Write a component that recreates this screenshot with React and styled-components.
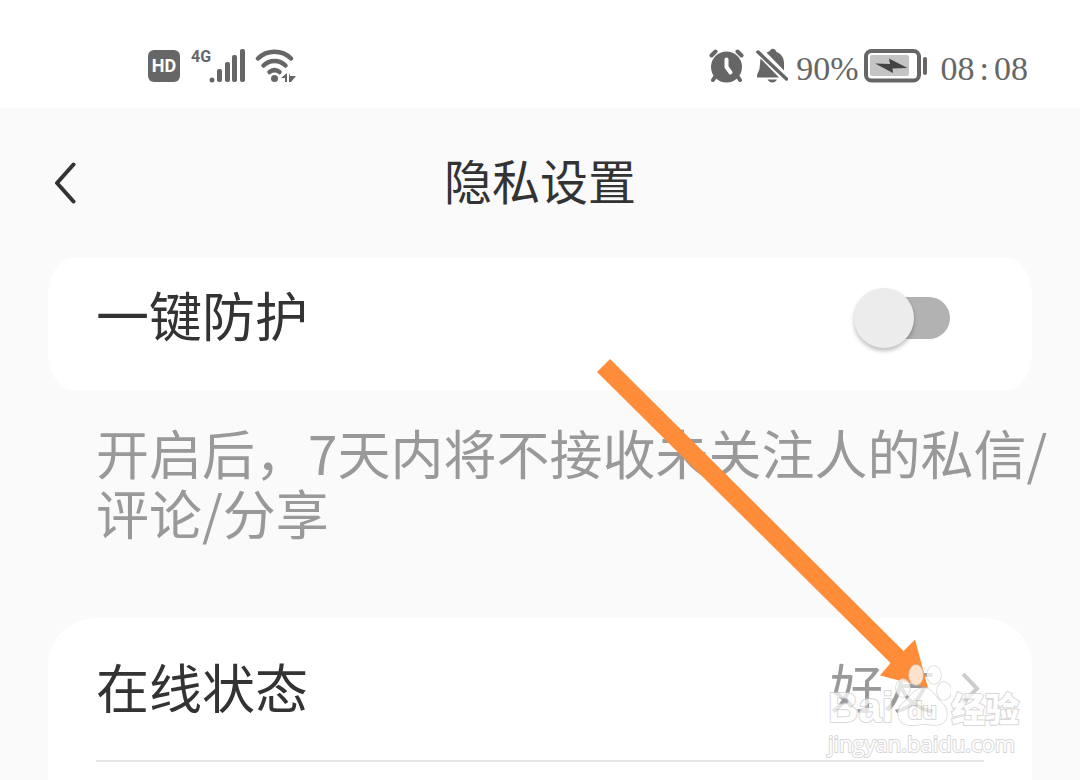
import React, { useState } from 'react';
import styled, { createGlobalStyle } from 'styled-components';

const App = () => {
  const [guard, setGuard] = useState(false);

  return (
    <Page>
      <GlobalStyle />
      <StatusBar>
        <StatusGroup>
          <HdBadge>HD</HdBadge>
          <Network>4G</Network>
          <SignalIcon />
          <WifiIcon />
        </StatusGroup>
        <StatusGroup>
          <AlarmIcon />
          <MutedIcon />
          <StatusText>90%</StatusText>
          <BatteryIcon />
          <Clock>
            <span>08</span>
            <span>:</span>
            <span>08</span>
          </Clock>
        </StatusGroup>
      </StatusBar>

      <Header>
        <BackButton aria-label="返回">
          <svg width="24" height="44" viewBox="0 0 24 44" fill="none">
            <path
              d="M21.500 3.500 5 22 21.500 40.500"
              stroke="#333"
              strokeWidth="4"
              strokeLinecap="round"
              strokeLinejoin="round"
            />
          </svg>
        </BackButton>
        <Title>隐私设置</Title>
      </Header>

      <GuardCard>
        <Label htmlFor="guard">一键防护</Label>
        <Switch
          id="guard"
          type="checkbox"
          role="switch"
          checked={guard}
          onChange={(e) => setGuard(e.target.checked)}
        />
      </GuardCard>
      <Hint>开启后，7天内将不接收未关注人的私信/评论/分享</Hint>

      <ListCard>
        <ListRow>
          <RowName>在线状态</RowName>
          <RowValue>
            <RowName>好友</RowName>
            <svg width="22" height="36" viewBox="0 0 22 36" fill="none">
              <path d="M1 3 15 17.500 1 32" stroke="#ccc" strokeWidth="4" />
            </svg>
          </RowValue>
        </ListRow>
      </ListCard>

      <Arrow width="332" height="330" viewBox="0 0 332 330">
        <path
          d="M13 0 306.500 292 318 280.500 331 329 283 316.500 293.500 304 0 13Z"
          fill="#ff8c39"
        />
      </Arrow>

      <Watermark>
        <Brand>
          <Latin>Bai</Latin>
          <Paw>
            <svg width="58" height="64" viewBox="0 0 58 64">
              <g fill="#fff" stroke="#ccc" strokeWidth="1.500">
                <ellipse cx="10" cy="25" rx="7" ry="9" />
                <ellipse cx="23" cy="12" rx="7" ry="10" />
                <ellipse cx="41" cy="12" rx="7" ry="9" />
                <ellipse cx="51" cy="28" rx="7" ry="9" />
                <path d="M31 25c8 0 11 9 17 14 9 8 8 23-5 23-6 0-8-1-13-1s-8 2-14 1C4 61 2 47 10 40c8-6 11-15 21-15Z" />
              </g>
            </svg>
            <PawText>du</PawText>
          </Paw>
          <Chinese>经验</Chinese>
        </Brand>
        <Site>jingyan.baidu.com</Site>
      </Watermark>
    </Page>
  );
};

export default App;

const SignalIcon = () => (
  <Signal width="36" height="34" viewBox="0 0 36 34" fill="#666">
    <circle cx="3" cy="31" r="2.500" />
    <rect x="8" y="20" width="5" height="13" rx="2" />
    <rect x="16" y="13" width="5" height="20" rx="2" />
    <rect x="23" y="6" width="5" height="27" rx="2" />
    <rect x="31" y="0" width="5" height="33" rx="2" />
  </Signal>
);

const WifiIcon = () => (
  <Wifi width="42" height="34" viewBox="0 0 42 34" fill="none">
    <g stroke="#666" strokeWidth="4.500" strokeLinecap="round">
      <path d="M3 9.500C12 .5 27 .5 36 9.500" />
      <path d="M8.500 16.500c6-6 16-6 22 0" />
      <path d="M14.500 23c3.500-2.500 7-2.500 10 0" />
    </g>
    <circle cx="19.500" cy="29.500" r="3.500" fill="#666" />
    <path d="M32 24v9h-2v-4h-4zM34 24l1 3h6l-5 6h-2z" fill="#666" />
  </Wifi>
);

const AlarmIcon = () => (
  <svg width="36" height="34" viewBox="0 0 36 34" fill="none">
    <circle cx="17.500" cy="18" r="15.500" fill="#666" />
    <g stroke="#666" strokeWidth="4" strokeLinecap="round">
      <path d="M2.500 6.500 6.500 2.500M32.500 6.500 28.500 2.500M6 28l-2 3M29 28l2 3" />
    </g>
    <path
      d="M17.500 10.500V18l4 5.500"
      stroke="#fff"
      strokeWidth="4"
      strokeLinecap="round"
      strokeLinejoin="round"
    />
  </svg>
);

const MutedIcon = () => (
  <Muted width="34" height="36" viewBox="0 0 34 36" fill="#666">
    <path d="M6.500 10.500 25 29.500H3V27l2.500-6z" />
    <path d="M12.500 4.500 16 3c1-3 5-3 6.500 1 5 2 7.500 6 7.500 11v7.500z" />
    <path d="M13.500 31.500H23c-2 4-7.500 4-9.500 0Z" />
    <path d="M4 4 32.500 31" stroke="#666" strokeWidth="3.500" strokeLinecap="round" />
  </Muted>
);

const BatteryIcon = () => (
  <Battery width="64" height="34" viewBox="0 0 64 34">
    <rect x="2" y="2" width="53" height="29.500" rx="5.500" fill="none" stroke="#666" strokeWidth="4" />
    <rect x="6" y="6" width="39" height="21" rx="2" fill="#c4c4c4" />
    <path d="M11 14.500 26 15l-1-5.500L43.500 19l-15 .5L29 24z" fill="#444" />
    <rect x="59" y="8" width="4" height="18" rx="2" fill="#666" />
  </Battery>
);

const GlobalStyle = createGlobalStyle`
  * {
    box-sizing: border-box;
  }
  body {
    margin: 0;
    background: #fafafa;
    color: #333;
    font-family: 'Noto Sans CJK SC', 'Noto Sans', sans-serif;
  }
`;

const Page = styled.main`
  position: relative;
  display: flex;
  flex-direction: column;
  min-height: 100vh;
  overflow: hidden;
`;

const StatusBar = styled.div`
  display: flex;
  justify-content: space-between;
  padding: 48px 52px 24px 148px;
  height: 108px;
  background: #fff;
  color: #666;
`;

const StatusGroup = styled.div`
  display: flex;
  align-items: center;
`;

const HdBadge = styled.span`
  width: 32px;
  border-radius: 6px;
  background: #666;
  color: #fff;
  font: bold 18px/32px Roboto, sans-serif;
  text-align: center;
`;

const Network = styled.span`
  align-self: flex-start;
  width: 18px;
  margin-left: 11px;
  font: bold 16px/18px Roboto, sans-serif;
`;

const Signal = styled.svg`
  margin-right: 10px;
`;

const Wifi = styled.svg`
  display: block;
`;

const Muted = styled.svg`
  margin: 0 8px 0 9px;
`;

const Battery = styled.svg`
  margin: 0 13px 0 5px;
`;

const StatusText = styled.span`
  padding-top: 6px;
  font: 34px/36px 'Liberation Serif', serif;
`;

const Clock = styled.time`
  display: flex;
  gap: 5px;
  padding-top: 6px;
  font: 34px/36px 'Liberation Serif', serif;
`;

const Header = styled.header`
  display: grid;
  grid-template-columns: 96px 1fr 96px;
  align-items: center;
  height: 150px;
`;

const BackButton = styled.button`
  display: flex;
  justify-content: flex-end;
  padding: 0 20px;
  border: none;
  background: none;
  cursor: pointer;
`;

const Title = styled.h1`
  margin: 0;
  padding-bottom: 8px;
  font-size: 48px;
  font-weight: 400;
  line-height: 60px;
  text-align: center;
`;

const GuardCard = styled.section`
  display: flex;
  align-items: center;
  justify-content: space-between;
  margin: 0 48px;
  padding: 20px 82px 32px 48px;
  border-radius: 24px / 40px;
  background: #fff;
`;

const Label = styled.label`
  padding-bottom: 8px;
  font-size: 53px;
  line-height: 72px;
`;

const Switch = styled.input`
  appearance: none;
  display: grid;
  align-items: center;
  width: 96px;
  height: 60px;
  margin: 0;
  cursor: pointer;

  &::before,
  &::after {
    content: '';
    grid-area: 1 / 1;
  }
  &::before {
    height: 42px;
    margin-left: 8px;
    border-radius: 21px;
    background: #b2b2b2;
  }
  &::after {
    width: 60px;
    height: 60px;
    border-radius: 50%;
    background: #ececec;
    box-shadow: 0 3px 4px rgba(0, 0, 0, 0.25);
  }
  &:checked::after {
    justify-self: end;
  }
`;

const Hint = styled.p`
  margin: 0;
  padding: 32px 24px 76px 96px;
  color: #999;
  font-size: 53px;
  line-height: 60px;
  word-break: break-all;
`;

const ListCard = styled.section`
  flex: 1;
  margin: 0 48px;
  padding: 0 48px;
  border-radius: 48px 48px 0 0;
  background: #fff;
`;

const ListRow = styled.div`
  display: flex;
  align-items: center;
  justify-content: space-between;
  height: 144px;
  border-bottom: 2px solid #e6e6e6;
`;

const RowName = styled.span`
  padding-bottom: 6px;
  font-size: 53px;
  line-height: 72px;
`;

const RowValue = styled.div`
  display: flex;
  align-items: center;
  gap: 26px;
  color: #999;
`;

const Arrow = styled.svg`
  position: absolute;
  top: 359px;
  right: 151px;
`;

const Watermark = styled.div`
  position: absolute;
  top: 663px;
  right: 58px;
  width: 194px;
  color: #fff;
  opacity: 0.75;
  -webkit-text-stroke: 2px #ccc;
  paint-order: stroke fill;
`;

const Brand = styled.div`
  display: flex;
  align-items: flex-end;
  height: 64px;
`;

const Latin = styled.span`
  font: bold 42px/38px 'Liberation Sans', sans-serif;
`;

const Paw = styled.div`
  display: grid;
  place-items: end center;

  > * {
    grid-area: 1 / 1;
  }
`;

const PawText = styled.span`
  font: bold 24px/32px 'Liberation Sans', sans-serif;
`;

const Chinese = styled.span`
  font-size: 34px;
  font-weight: 900;
  line-height: 38px;
`;

const Site = styled.div`
  font: 500 22px/32px 'Open Sans', 'Noto Sans', sans-serif;
`;
